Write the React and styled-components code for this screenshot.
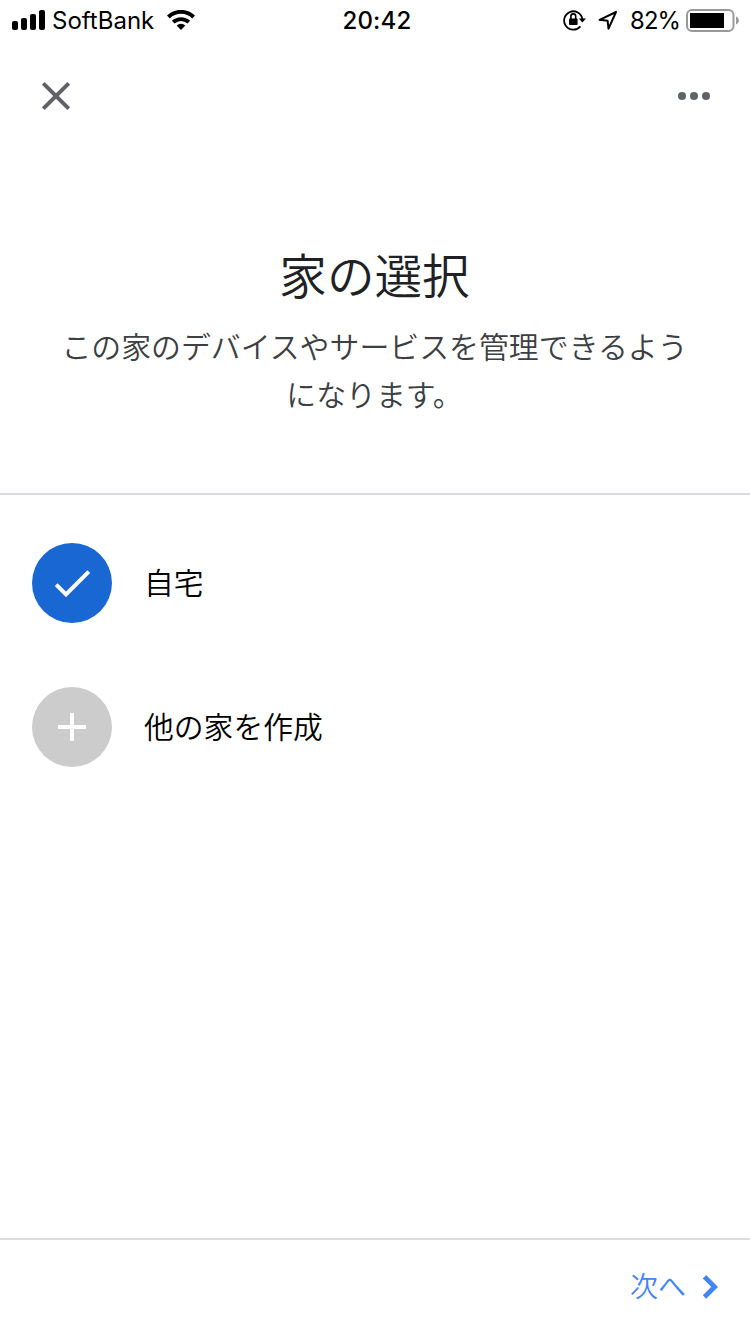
import React from "react";
import styled, { createGlobalStyle } from "styled-components";

const GlobalStyle = createGlobalStyle`
  * { box-sizing: border-box; }
  body { margin: 0; background: #fff; }
  button { border: 0; padding: 0; background: none; font: inherit; color: inherit; }
  svg { display: block; flex: none; }
`;

const Screen = styled.div`
  width: 750px;
  height: 1334px;
  display: flex;
  flex-direction: column;
  overflow: hidden;
  background: #fff;
  font-family: Inter, "Noto Sans CJK JP", sans-serif;
  font-weight: 350;
`;

const StatusBar = styled.div`
  height: 40px;
  flex: none;
  display: grid;
  grid-template-columns: 1fr auto 1fr;
  align-items: center;
  padding: 0 11px 0 12px;
  color: #000;
  font-size: 24px;
  line-height: 38px;
  font-weight: 400;
`;

const StatusGroup = styled.div`
  display: flex;
  align-items: center;
  justify-content: ${(p) => (p.$end ? "flex-end" : "flex-start")};
`;

const Carrier = styled.span`
  margin: 0 13px 0 7px;
  padding-top: 2px;
`;

const Clock = styled.span`
  font-weight: 550;
  letter-spacing: 0.2px;
  padding: 2px 0 0 3px;
`;

const Percent = styled.span`
  margin: 0 6px 0 12px;
  padding-top: 2px;
  font-size: 23.8px;
  letter-spacing: -0.9px;
`;

const Toolbar = styled.nav`
  height: 112px;
  flex: none;
  display: flex;
  align-items: center;
  justify-content: space-between;
  padding: 0 40px;
  color: #5f6368;
`;

const Intro = styled.header`
  height: 343px;
  flex: none;
  padding: 89px 1px 0 0;
  text-align: center;
  border-bottom: 2px solid #dadce0;
`;

const Title = styled.h1`
  margin: 0;
  font-size: 47.6px;
  line-height: 72px;
  font-weight: 350;
  color: #202124;
`;

const Description = styled.p`
  margin: 10px auto 0;
  width: 630px;
  font-size: 29.9px;
  line-height: 48px;
  color: #3c4043;
`;

const Options = styled.main`
  flex: 1;
  padding-top: 16px;
`;

const Option = styled.div`
  height: 144px;
  display: flex;
  align-items: center;
  gap: 32px;
  padding: 0 32px;
  font-size: 29.8px;
  line-height: 44px;
  color: #000;
`;

const Badge = styled.div`
  width: 80px;
  height: 80px;
  border-radius: 50%;
  background: ${(p) => (p.$selected ? "#1967d2" : "#ccc")};
  color: #fff;
`;

const Footer = styled.footer`
  height: 96px;
  flex: none;
  display: flex;
  align-items: center;
  justify-content: flex-end;
  padding-right: 32px;
  border-top: 2px solid #dadce0;
`;

const NextButton = styled.button`
  display: flex;
  align-items: center;
  gap: 16px;
  font-size: 28px;
  line-height: 40px;
  color: #4285f4;
`;

const SignalIcon = () => (
  <svg width="33" height="20" viewBox="0 0 33 20" fill="currentColor">
    <rect x="0" y="11" width="6" height="9" rx="2" />
    <rect x="9" y="8" width="6" height="12" rx="2" />
    <rect x="18" y="4" width="6" height="16" rx="2" />
    <rect x="27" y="0" width="6" height="20" rx="2" />
  </svg>
);

const WifiIcon = () => (
  <svg width="28" height="20" viewBox="0 0 28 20" fill="none" stroke="currentColor" strokeWidth="4">
    <path d="M1.4 7a18 18 0 0 1 25.2 0" />
    <path d="M6.2 12.2a11.2 11.2 0 0 1 15.6 0" strokeWidth="3.8" />
    <path d="M14 20l-4.3-4.5a6.2 6.2 0 0 1 8.6 0z" fill="currentColor" stroke="none" />
  </svg>
);

const RotationLockIcon = () => (
  <svg width="24" height="22" viewBox="0 0 24 22" fill="none" stroke="currentColor" strokeWidth="1.8">
    <path d="M17.4 17.4A9.2 9.2 0 1 1 19.4 10" />
    <path d="M15.8 9.5h7.2l-3.6 4z" fill="currentColor" stroke="none" />
    <rect x="6" y="9.4" width="8.6" height="6.6" rx="1" fill="currentColor" stroke="none" />
    <path d="M7.9 10V7.3a2.4 2.4 0 0 1 4.8 0V10" strokeWidth="1.6" />
  </svg>
);

const LocationIcon = () => (
  <svg width="20" height="20" viewBox="0 0 20 20" fill="none" stroke="currentColor" strokeWidth="2" strokeLinejoin="round">
    <path d="M18 2L1.6 9.8l8 .9.9 8z" />
  </svg>
);

const LocationSlot = styled.span`
  margin: 0 0 0 11px;
`;

const BatteryIcon = () => (
  <svg width="53" height="24" viewBox="0 0 53 24">
    <rect x="1" y="2" width="46.5" height="21" rx="5" fill="none" stroke="#999" strokeWidth="2" />
    <rect x="4" y="5" width="34" height="15" fill="#000" />
    <path d="M50 8.6c1.7.5 2.8 1.9 2.8 3.9s-1.1 3.4-2.8 3.9z" fill="#999" />
  </svg>
);

const CloseIcon = () => (
  <svg width="32" height="32" viewBox="0 0 32 32" stroke="currentColor" strokeWidth="4">
    <path d="M3.3 3.3l25.4 25.4M28.7 3.3L3.3 28.7" />
  </svg>
);

const MoreIcon = () => (
  <svg width="32" height="8" viewBox="0 0 32 8" fill="currentColor">
    <circle cx="4" cy="4" r="4" />
    <circle cx="16" cy="4" r="4" />
    <circle cx="28" cy="4" r="4" />
  </svg>
);

const CheckIcon = () => (
  <svg width="80" height="80" viewBox="0 0 80 80" fill="none" stroke="currentColor" strokeWidth="4">
    <path d="M24.2 41.7L34 51.4L56.8 28.6" />
  </svg>
);

const PlusIcon = () => (
  <svg width="80" height="80" viewBox="0 0 80 80" stroke="currentColor" strokeWidth="4">
    <path d="M26 40h28M40 26v28" />
  </svg>
);

const ChevronIcon = () => (
  <svg width="16" height="24" viewBox="0 0 16 24" fill="none" stroke="currentColor" strokeWidth="4.8">
    <path d="M2.5 1.8L12.6 11.9L2.5 22" />
  </svg>
);

export default function App() {
  return (
    <>
      <GlobalStyle />
      <Screen lang="ja">
        <StatusBar>
          <StatusGroup>
            <SignalIcon />
            <Carrier>SoftBank</Carrier>
            <WifiIcon />
          </StatusGroup>
          <Clock>20:42</Clock>
          <StatusGroup $end>
            <RotationLockIcon />
            <LocationSlot><LocationIcon /></LocationSlot>
            <Percent>82%</Percent>
            <BatteryIcon />
          </StatusGroup>
        </StatusBar>
        <Toolbar>
          <button aria-label="閉じる"><CloseIcon /></button>
          <button aria-label="その他"><MoreIcon /></button>
        </Toolbar>
        <Intro>
          <Title>家の選択</Title>
          <Description>この家のデバイスやサービスを管理できるようになります。</Description>
        </Intro>
        <Options>
          <Option>
            <Badge $selected><CheckIcon /></Badge>
            <span>自宅</span>
          </Option>
          <Option>
            <Badge><PlusIcon /></Badge>
            <span>他の家を作成</span>
          </Option>
        </Options>
        <Footer>
          <NextButton>
            <span>次へ</span>
            <ChevronIcon />
          </NextButton>
        </Footer>
      </Screen>
    </>
  );
}
